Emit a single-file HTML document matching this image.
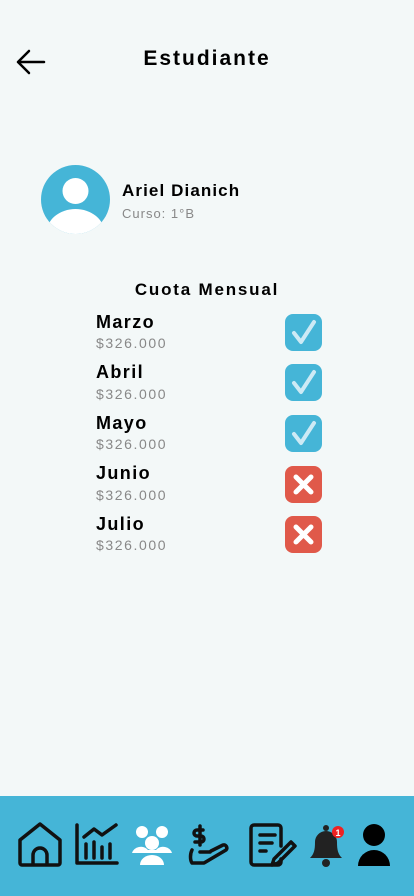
<!DOCTYPE html>
<html><head><meta charset="utf-8"><style>
body{margin:0;width:414px;height:896px;background:#f3f8f8;font-family:"Liberation Sans",sans-serif;position:relative;overflow:hidden;color:#000}
.a{position:absolute}
.t{font-size:21px;font-weight:bold;left:0;width:414px;text-align:center;top:47px;letter-spacing:2px}
.m{left:96px;font-size:18px;font-weight:bold;letter-spacing:1.4px}
.p{left:96px;font-size:14px;color:#888;letter-spacing:1.6px}
.ic{left:285px;width:37px;height:37px;border-radius:8px}
.ok{background:#45b5d7}.no{background:#e0594a}
.nav{left:0;top:796px;width:414px;height:100px;background:#45b5d7}
</style></head><body>
<svg class="a" style="left:14px;top:48px" width="34" height="28" viewBox="0 0 34 28"><path d="M30 14H4M15 3L4 14l11 11" stroke="#000" stroke-width="2.5" fill="none" stroke-linecap="round" stroke-linejoin="round"/></svg>
<div class="a t">Estudiante</div>
<svg class="a" style="left:41px;top:165px" width="69" height="69" viewBox="0 0 69 69"><defs><clipPath id="c"><circle cx="34.5" cy="34.5" r="34.5"/></clipPath></defs><circle cx="34.5" cy="34.5" r="34.5" fill="#45b5d7"/><g clip-path="url(#c)" fill="#fff"><circle cx="34.5" cy="26" r="13"/><ellipse cx="34.5" cy="68" rx="29" ry="24"/></g></svg>
<div class="a" style="left:122px;top:181px;font-size:17px;font-weight:bold;letter-spacing:1.1px">Ariel Dianich</div>
<div class="a" style="left:122px;top:206px;font-size:13px;color:#888;letter-spacing:1px">Curso: 1°B</div>
<div class="a" style="left:0;width:414px;text-align:center;top:280px;font-size:17px;font-weight:bold;letter-spacing:1.8px">Cuota Mensual</div>
<div class="a m" style="top:312px">Marzo</div><div class="a p" style="top:335px">$326.000</div>
<div class="a ic ok" style="top:314px"></div>
<div class="a m" style="top:362px">Abril</div><div class="a p" style="top:386px">$326.000</div>
<div class="a ic ok" style="top:364px"></div>
<div class="a m" style="top:413px">Mayo</div><div class="a p" style="top:436px">$326.000</div>
<div class="a ic ok" style="top:415px"></div>
<div class="a m" style="top:463px">Junio</div><div class="a p" style="top:487px">$326.000</div>
<div class="a ic no" style="top:466px"></div>
<div class="a m" style="top:514px">Julio</div><div class="a p" style="top:537px">$326.000</div>
<div class="a ic no" style="top:516px"></div>
<svg class="a" style="left:285px;top:314px" width="37" height="240" viewBox="0 0 37 240">
<g stroke="#cdeaf5" stroke-width="4" fill="none" stroke-linecap="round" stroke-linejoin="round">
<path d="M9 19l7 9 13-20"/><path d="M9 69l7 9 13-20"/><path d="M9 120l7 9 13-20"/></g>
<g stroke="#fff" stroke-width="5" stroke-linecap="round">
<path d="M11 163l15 15M26 163l-15 15"/><path d="M11 213l15 15M26 213l-15 15"/></g></svg>
<div class="a nav"></div>
<svg class="a" style="left:0;top:820px" width="414" height="50" viewBox="0 0 414 50">
<g fill="none" stroke="#111" stroke-width="3.5" stroke-linejoin="round" stroke-linecap="round">
<path d="M20 20L40 4l20 16v23a2 2 0 0 1-2 2H22a2 2 0 0 1-2-2z"/><path d="M33 44V35a7 7 0 0 1 14 0v9"/>
<path d="M77 5v38h40"/><path d="M86 24v14M94 22v16M102 27v11M110 24v14"/><path d="M84 17l10-8 8 6 14-10"/>
<path d="M203 10h-6a3 3 0 0 0 0 6h4a3 3 0 0 1 0 6h-6M200 6v19"/><path d="M192 30c-2 4-2 10 0 13h12l22-13c2-2 0-6-3-5l-12 6"/><path d="M200 32h10"/>
<path d="M281 26V8a3 3 0 0 0-3-3h-24a3 3 0 0 0-3 3v34a3 3 0 0 0 3 3h24a3 3 0 0 0 3-3v-3"/><path d="M260 15h15M260 23h12M260 31h6"/><path d="M291 22l-17 17-2 6 6-2 17-17z"/>
</g>
<g fill="#fff"><circle cx="142" cy="12" r="6"/><circle cx="162" cy="12" r="6"/><circle cx="152" cy="23" r="7"/><path d="M132 33a9 8 0 0 1 16-3h8a9 8 0 0 1 16 3zM140 45a12 10 0 0 1 24 0z"/></g>
<path d="M310 38c4-4 5-8 5-16a11 11 0 0 1 22 0c0 8 1 12 5 16z" fill="#222"/><circle cx="326" cy="43" r="4" fill="#222"/><circle cx="326" cy="8" r="3" fill="#222"/>
<circle cx="338" cy="12" r="6" fill="#e22"/><text x="338" y="16" font-size="9" font-weight="bold" fill="#fff" text-anchor="middle" font-family="Liberation Sans">1</text>
<circle cx="374" cy="15" r="11" fill="#000"/><path d="M358 46a16 16 0 0 1 32 0z" fill="#000"/>
</svg>
</body></html>
